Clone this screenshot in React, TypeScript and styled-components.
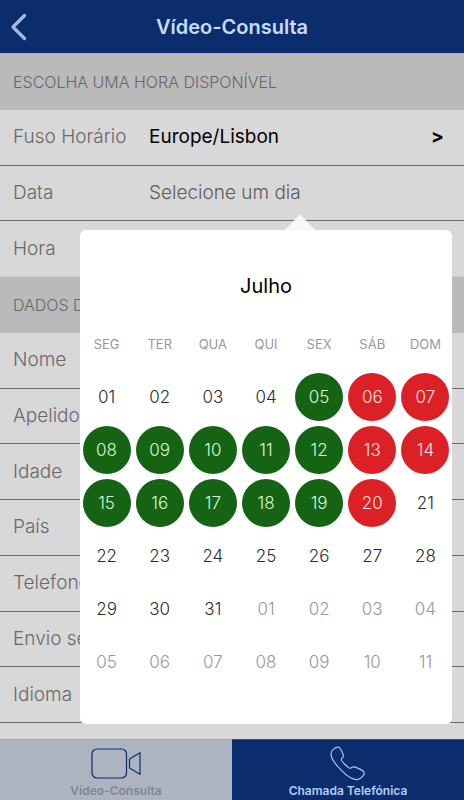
import React from 'react';
import styled, { createGlobalStyle, css } from 'styled-components';

const GlobalStyle = createGlobalStyle`
  *, *::before, *::after { box-sizing: border-box; }
  html, body { margin: 0; padding: 0; }
  body { background: #d8d8d8; font-family: Inter, Roboto, "Liberation Sans", sans-serif; }
  button, input { font: inherit; }
`;

const Page = styled.div`
  min-height: 100vh;
  display: flex;
  flex-direction: column;
  background: #d8d8d8;
`;

const Header = styled.header`
  display: grid;
  grid-template-columns: 56px 1fr 56px;
  align-items: center;
  height: 54px;
  background: #0b2d6e;
  border-bottom: 1px solid #a5b3cf;
`;

const BackButton = styled.button`
  display: flex;
  align-items: center;
  height: 53px;
  padding: 0 0 0 10px;
  border: 0;
  background: none;
  color: #a3b9e0;
`;

const Title = styled.h1`
  margin: 0;
  text-align: center;
  font-size: 20px;
  line-height: 24px;
  font-weight: 600;
  color: #c9dcfb;
`;

const Form = styled.form`
  flex: 1;
  display: flex;
  flex-direction: column;
  padding-bottom: 16px;
`;

const SectionTitle = styled.h2`
  flex: 1 0 52px;
  display: flex;
  align-items: center;
  margin: 0;
  padding: 0 13px;
  background: #bababa;
  font-size: 16px;
  line-height: 20px;
  font-weight: 300;
  color: #666668;
`;

const Row = styled.div<{ $last?: boolean }>`
  position: relative;
  flex: 1 0 52px;
  display: grid;
  grid-template-columns: 136px 1fr;
  align-items: center;
  padding: 0 20px 0 13px;
  border-bottom: 1px solid ${(p) => (p.$last ? '#cccccc' : '#69696b')};
`;

const Label = styled.label`
  font-size: 19px;
  line-height: 24px;
  font-weight: 300;
  color: #69696b;
  white-space: nowrap;
`;

const PickerButton = styled.button<{ $empty?: boolean }>`
  display: flex;
  align-items: center;
  justify-content: space-between;
  padding: 0;
  border: 0;
  background: none;
  font-size: 19px;
  line-height: 24px;
  font-weight: ${(p) => (p.$empty ? 300 : 400)};
  color: ${(p) => (p.$empty ? '#5c5c5e' : '#000')};
`;

const Chevron = styled.span`
  font-weight: 700;
`;

const TextInput = styled.input`
  width: 100%;
  padding: 0;
  border: 0;
  outline: 0;
  background: transparent;
  font-size: 19px;
  line-height: 24px;
`;

const Popover = styled.div`
  position: absolute;
  z-index: 1;
  top: calc(100% + 10px);
  left: 80px;
  right: 12px;
  padding: 32px 0 36px;
  border-radius: 6px;
  background: #fff;

  &::before {
    content: '';
    position: absolute;
    bottom: 100%;
    left: 205px;
    border: solid transparent;
    border-width: 0 15px 16px;
    border-bottom-color: #f7f7f7;
  }
`;

const Calendar = styled.table`
  width: 100%;
  table-layout: fixed;
  border-collapse: collapse;
`;

const Month = styled.caption`
  height: 55px;
  font-size: 20px;
  line-height: 48px;
  color: #000;
`;

const Weekday = styled.th`
  height: 53px;
  padding: 0;
  font-size: 13px;
  line-height: 16px;
  font-weight: 400;
  color: #98989a;
`;

const DayCell = styled.td`
  height: 53px;
  padding: 0;
  text-align: center;
`;

type Kind = 'plain' | 'free' | 'full' | 'outside';

const dayKinds = {
  plain: css`background: none; color: #2c2c2e;`,
  free: css`background: #146414; color: #d8fbd2;`,
  full: css`background: #db2125; color: #ffe2df;`,
  outside: css`background: none; color: #98989a;`,
};

const DayButton = styled.button<{ $kind: Kind }>`
  display: block;
  width: 48px;
  height: 48px;
  margin: 0 auto;
  padding: 0;
  border: 0;
  border-radius: 50%;
  font-size: 17px;
  line-height: 48px;
  font-weight: 300;
  ${(p) => dayKinds[p.$kind]}
`;

const TabBar = styled.nav`
  display: grid;
  grid-template-columns: 1fr 1fr;
`;

const Tab = styled.button<{ $active?: boolean }>`
  display: flex;
  flex-direction: column;
  align-items: center;
  gap: 1px;
  height: 61px;
  padding: 6px 0 0;
  border: 0;
  border-top: 1px solid ${(p) => (p.$active ? '#9c9fb0' : '#3b5080')};
  background: ${(p) => (p.$active ? '#adb4c1' : '#0b2d6e')};
  color: ${(p) => (p.$active ? '#808693' : '#b7cdf5')};
  font-size: 12px;
  line-height: 18px;
  font-weight: 600;
`;

const BackIcon = () => (
  <svg width="18" height="28" viewBox="0 0 18 28" fill="none" stroke="currentColor" strokeWidth="3.2" strokeLinecap="round" strokeLinejoin="round" aria-hidden="true">
    <path d="M14.500 2.500 3 14l11.500 11.500" />
  </svg>
);

const VideoIcon = () => (
  <svg width="50" height="35" viewBox="0 0 50 35" fill="none" stroke="#0c2a63" strokeWidth="1.2" aria-hidden="true">
    <rect x="1" y="3" width="34.5" height="29" rx="5" />
    <path d="M38.500 13 49 6.800v21.400L38.500 22Z" />
  </svg>
);

const PhoneIcon = () => (
  <svg width="36" height="35" viewBox="0 0 36 35" fill="none" stroke="#a9c4f5" strokeWidth="1.2" strokeLinejoin="round" aria-hidden="true">
    <path d="M7.500 1.200C10 .2 11 3.500 12.500 7c1.500 3.200 1 4-1 5.800-1 1 .5 2.700 3 5.200 2.800 2.800 5 4.800 6 4.200 2-1.600 3-2 5.500-.8 3.500 1.600 7.500 3 8.200 5.300.5 2-2.700 5.800-6 6.700-4.500 1-11.500-3.500-17-9.200C5.500 18.500.800 11.500 1 7.700 1.200 4.500 4.500 2 7.500 1.200Z" />
  </svg>
);

const weekdays = ['SEG', 'TER', 'QUA', 'QUI', 'SEX', 'SÁB', 'DOM'];
const free = [5, 8, 9, 10, 11, 12, 15, 16, 17, 18, 19];
const full = [6, 7, 13, 14, 20];

const weeks = Array.from({ length: 6 }, (_, w) =>
  Array.from({ length: 7 }, (_, d) => {
    const n = w * 7 + d + 1;
    const kind: Kind = n > 31 ? 'outside' : free.includes(n) ? 'free' : full.includes(n) ? 'full' : 'plain';
    return { text: String(n > 31 ? n - 31 : n).padStart(2, '0'), kind };
  }),
);

const personal = [
  { id: 'nome', label: 'Nome' },
  { id: 'apelido', label: 'Apelido' },
  { id: 'idade', label: 'Idade' },
  { id: 'pais', label: 'País' },
  { id: 'telefone', label: 'Telefone' },
  { id: 'envio', label: 'Envio seguro' },
  { id: 'idioma', label: 'Idioma' },
];

const MonthCalendar = () => (
  <Calendar>
    <Month>Julho</Month>
    <thead>
      <tr>
        {weekdays.map((d) => (
          <Weekday key={d} scope="col">{d}</Weekday>
        ))}
      </tr>
    </thead>
    <tbody>
      {weeks.map((week, i) => (
        <tr key={i}>
          {week.map((day) => (
            <DayCell key={day.text}>
              <DayButton type="button" $kind={day.kind}>{day.text}</DayButton>
            </DayCell>
          ))}
        </tr>
      ))}
    </tbody>
  </Calendar>
);

export default function App() {
  return (
    <Page>
      <GlobalStyle />
      <Header>
        <BackButton type="button" aria-label="Voltar"><BackIcon /></BackButton>
        <Title>Vídeo-Consulta</Title>
      </Header>
      <Form>
        <SectionTitle>ESCOLHA UMA HORA DISPONÍVEL</SectionTitle>
        <Row>
          <Label htmlFor="fuso">Fuso Horário</Label>
          <PickerButton id="fuso" type="button">
            Europe/Lisbon <Chevron>&gt;</Chevron>
          </PickerButton>
        </Row>
        <Row>
          <Label htmlFor="data">Data</Label>
          <PickerButton id="data" type="button" $empty>Selecione um dia</PickerButton>
          <Popover>
            <MonthCalendar />
          </Popover>
        </Row>
        <Row $last>
          <Label htmlFor="hora">Hora</Label>
          <TextInput id="hora" />
        </Row>
        <SectionTitle>DADOS DO PACIENTE</SectionTitle>
        {personal.map((f) => (
          <Row key={f.id}>
            <Label htmlFor={f.id}>{f.label}</Label>
            <TextInput id={f.id} />
          </Row>
        ))}
      </Form>
      <TabBar>
        <Tab type="button" $active>
          <VideoIcon />
          Vídeo-Consulta
        </Tab>
        <Tab type="button">
          <PhoneIcon />
          Chamada Telefónica
        </Tab>
      </TabBar>
    </Page>
  );
}
